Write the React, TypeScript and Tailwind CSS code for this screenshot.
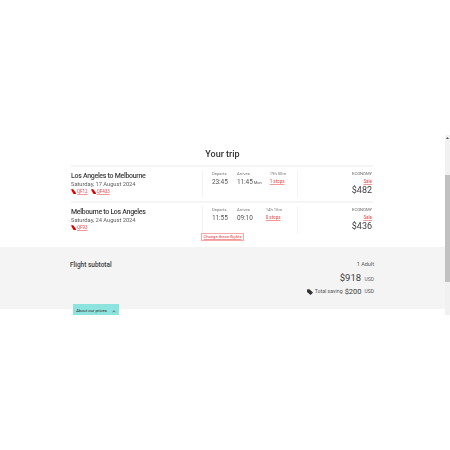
const PlaneTail = () => (
  <svg width="5" height="5" viewBox="0 0 10 10" className="shrink-0">
    <path d="M0 1 L4 0 L10 8 L10 10 L5 10 Z" fill="#e40000" />
  </svg>
);

const TagIcon = () => (
  <svg width="6" height="6" viewBox="0 0 10 10" className="shrink-0">
    <path d="M0 1 L4 0.5 L10 6 L6 10 L0 5 Z" fill="#323232" />
  </svg>
);

type Flight = {
  route: string;
  date: string;
  codes: string[];
  departs: string;
  arrives: string;
  nextDay?: boolean;
  duration: string;
  durationGap: string;
  stops: string;
  price: string;
};

const flights: Flight[] = [
  {
    route: "Los Angeles to Melbourne",
    date: "Saturday, 17 August 2024",
    codes: ["QF12", "QF433"],
    departs: "23:45",
    arrives: "11:45",
    nextDay: true,
    duration: "19h 00m",
    durationGap: "ml-[8px]",
    stops: "1 stops",
    price: "$482",
  },
  {
    route: "Melbourne to Los Angeles",
    date: "Saturday, 24 August 2024",
    codes: ["QF93"],
    departs: "11:55",
    arrives: "09:10",
    duration: "14h 15m",
    durationGap: "ml-[13px]",
    stops: "0 stops",
    price: "$436",
  },
];

const FlightRow = ({ flight }: { flight: Flight }) => (
  <div className="flex h-[36px] border-t-2 border-[#f5f5f5] pt-[3px]">
    <div className="w-[131px] pt-[1px]">
      <div className="text-[7px] leading-[10px] font-medium tracking-[-0.3px] text-[#3c3c3c]">{flight.route}</div>
      <div className="text-[5.8px] leading-[7px] tracking-[-0.05px] text-[#5f5f5f]">{flight.date}</div>
      <div className="flex gap-[3px]">
        {flight.codes.map((code) => (
          <div key={code} className="flex items-center gap-[1px]">
            <PlaneTail />
            <span className="text-[4.5px] leading-[7px] text-[#e8444a] underline decoration-[#f29a9a]">{code}</span>
          </div>
        ))}
      </div>
    </div>
    <div className="flex w-[95px] border-l border-[#f3f3f3] pl-[9px] h-[28px]">
      <div className="w-[25px]">
        <div className="text-[4.2px] leading-[8px] text-[#777777]">Departs</div>
        <div className="text-[6.5px] leading-[8px] -mt-[0.5px] tracking-[-0.1px] text-[#555555]">{flight.departs}</div>
      </div>
      <div className="whitespace-nowrap">
        <div className="text-[4.2px] leading-[8px] text-[#777777]">Arrives</div>
        <div className="text-[6.5px] leading-[8px] -mt-[0.5px] tracking-[-0.1px] text-[#555555]">
          {flight.arrives}
          {flight.nextDay && <span className="text-[4px] ml-[1px] tracking-normal">Mon</span>}
        </div>
      </div>
      <div className={`whitespace-nowrap ${flight.durationGap}`}>
        <div className="text-[4.2px] leading-[8px] text-[#777777]">{flight.duration}</div>
        <div className="text-[4.5px] leading-[8px] -mt-[0.5px] text-[#e8444a] underline decoration-[#f29a9a]">{flight.stops}</div>
      </div>
    </div>
    <div className="flex-1 border-l border-[#f3f3f3] h-[28px] pr-[1px] text-right">
      <div className="text-[4.2px] leading-[8px] text-[#666666]">ECONOMY</div>
      <div className="text-[4.5px] leading-[7px] text-[#e8444a] underline decoration-[#f29a9a]">Sale</div>
      <div className="text-[9px] leading-[9px] mt-[0.5px] text-[#3c3c3c]">{flight.price}</div>
    </div>
  </div>
);

export default function App() {
  return (
    <div className="flex h-[450px] w-[450px] flex-col bg-white font-['Roboto',sans-serif]">
      <div className="h-[135px]" />
      <div className="flex h-[180px]">
        <div className="flex w-[445px] flex-col blur-[0.25px]">
          <h1 className="mt-[13px] h-[17px] text-center text-[9px] leading-[13px] font-medium text-[#323232]">
            Your trip
          </h1>
          <div className="ml-[71px] w-[302px]">
            {flights.map((flight) => (
              <FlightRow key={flight.route} flight={flight} />
            ))}
          </div>
          <div className="flex h-[8px] justify-center -mt-[4px]">
            <span className="border border-[#f9a8a8] px-[1px] text-[4.2px] leading-[6px] text-[#e8444a] underline decoration-[#f29a9a]">
              Change these flights
            </span>
          </div>
          <div className="relative mt-[6px] h-[62px] bg-[#f4f4f4] pl-[70px] pr-[71px] pt-[13px]">
            <div className="flex justify-between">
              <div className="text-[6.5px] leading-[10px] font-medium text-[#3c3c3c]">Flight subtotal</div>
              <div className="text-[5.5px] leading-[8px] text-[#555555]">1 Adult</div>
            </div>
            <div className="mt-[1px] text-right text-[9.5px] leading-[14px] text-[#3c3c3c]">
              $918 <span className="ml-[1px] text-[5px] text-[#666666]">USD</span>
            </div>
            <div className="mt-[1px] flex items-center justify-end gap-[2px] text-[5.2px] leading-[9px] text-[#555555]">
              <TagIcon />
              <span>Total saving</span>
              <span className="text-[7.5px] text-[#3c3c3c]">$200</span>
              <span className="ml-[1px] text-[5px]">USD</span>
            </div>
            <div className="absolute top-[57px] left-[73px] flex h-[11px] w-[46px] items-center justify-center gap-[5px] bg-[#8de3de] pt-[3px] text-[4.2px] text-[#323232]">
              About our prices
              <svg width="4" height="3" viewBox="0 0 10 8">
                <path d="M1 6 L5 2 L9 6" fill="none" stroke="#323232" strokeWidth="1.6" />
              </svg>
            </div>
          </div>
        </div>
        <div className="flex w-[5px] flex-col bg-[#f1f1f1]">
          <div className="flex h-[40px] justify-center pt-[2px]">
            <svg width="3" height="2" viewBox="0 0 6 4">
              <path d="M3 0 L6 4 L0 4 Z" fill="#505050" />
            </svg>
          </div>
          <div className="h-[107px] bg-[#c1c1c1]" />
        </div>
      </div>
    </div>
  );
}
